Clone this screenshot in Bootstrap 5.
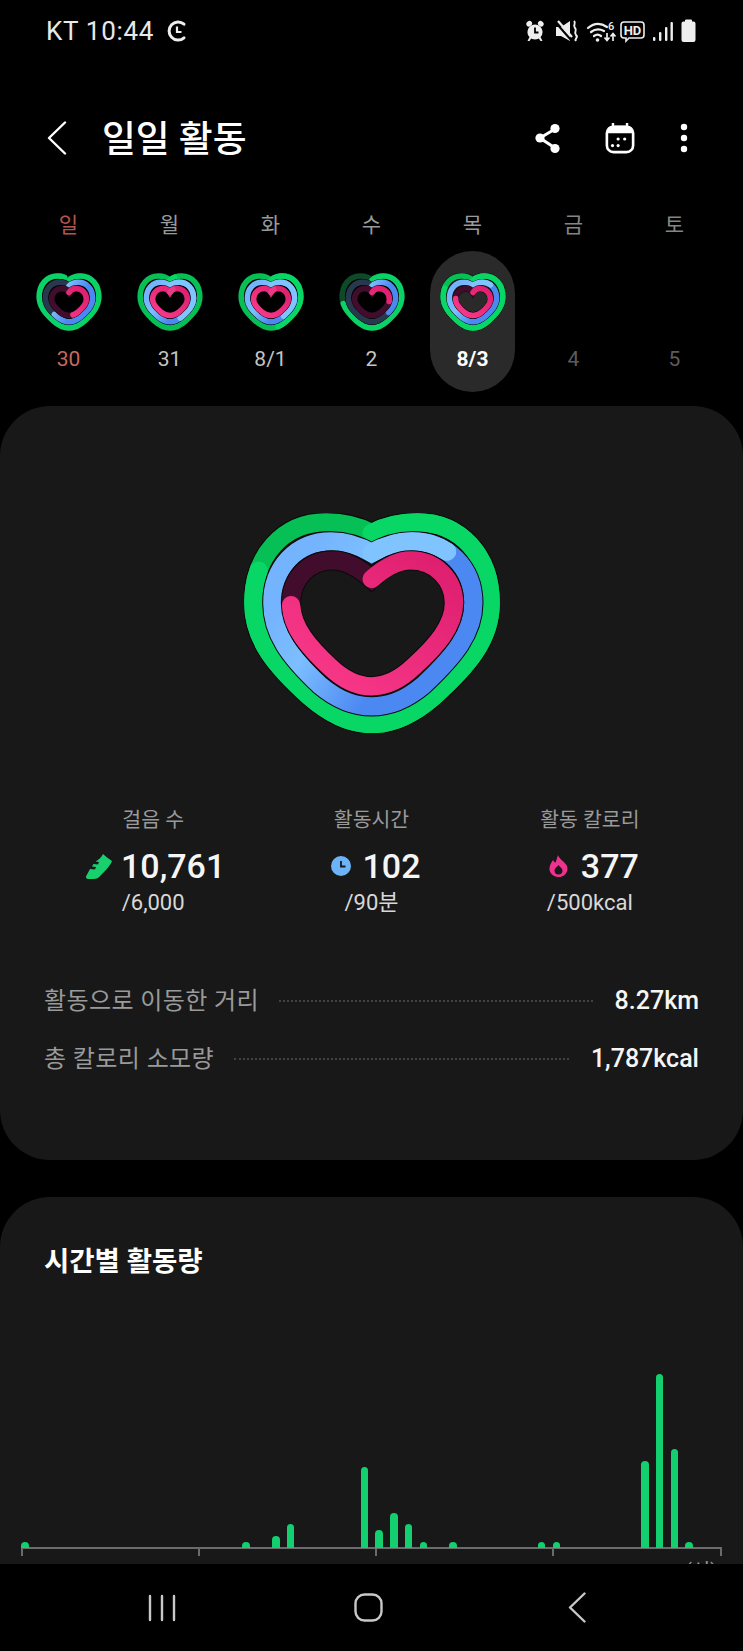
<!DOCTYPE html>
<html lang="ko">
<head>
  <meta charset="UTF-8" />
  <title>일일 활동</title>
  <link href="https://cdn.jsdelivr.net/npm/bootstrap@5.3.3/dist/css/bootstrap.min.css" rel="stylesheet" />
  <style>
    html, body { height: 1651px; overflow: hidden; }
    body { background: #000; color: #fff; font-family: Roboto, "Noto Sans CJK KR", sans-serif; }
    .screen { height: 1651px; }
    .scroll-area { min-height: 0; overflow: hidden; }

    .status-bar { height: 62px; padding: 0 47px 0 46px; font-size: 26px; color: #e8e8e8; }
    .status-time { margin-right: 13px; letter-spacing: .7px; }
    .status-icons svg { display: block; }

    .top-bar { height: 56px; margin-top: 48px; padding-left: 47px; }
    .top-back { stroke-width: 2.4; }
    .top-title { margin: 0 0 0 35px; padding-top: 4px; font-size: 36.8px; font-weight: 500; line-height: 56px; }
    .top-actions svg { display: block; }
    .action-cal { margin-left: 42px; }
    .action-more { margin-left: 45px; margin-right: 55px; }

    .week-strip { padding: 0 18px; margin-top: 44px; }
    .week-cell { flex: 0 0 101px; text-align: center; }
    .week-name { font-size: 21px; line-height: 30px; color: #9a9a9a; }
    .week-name.is-sun { color: #b5564e; }
    .week-name.is-off { color: #858585; }
    .day-row { margin-top: 11px; height: 141px; }
    .day-pill { width: 85px; height: 141px; margin: 0 auto; padding-top: 22px; border-radius: 43px; }
    .day-pill.is-today { background: #2a2a2a; }
    .day-pill svg { display: block; margin: 0 auto; }
    .heart-gap { height: 58px; }
    .day-date { margin-top: 13px; font-size: 21px; line-height: 30px; color: #c4c4c4; }
    .day-date.is-sun { color: #c9685e; }
    .day-date.is-off { color: #5c5c5c; }
    .day-date.is-today { color: #fff; font-weight: 700; }

    .panel { background: #181818; border-radius: 50px; }
    .panel-main { height: 754px; margin-top: 14px; padding: 107px 44px 0; }
    .panel-main .ring-heart { display: block; margin: 0 auto; }
    .stat-row { margin-top: 72px; }
    .stat-cell { flex: 1 1 0; text-align: center; }
    .stat-label { font-size: 20.5px; line-height: 30px; color: #9a9a9a; }
    .stat-value { height: 44px; margin-top: 9px; padding-left: 5px; font-size: 34px; font-weight: 500; line-height: 44px; color: #f5f5f5; }
    .stat-icon { flex: 0 0 26px; margin-right: 9px; }
    .stat-icon svg { display: block; margin: 0 auto; }
    .stat-goal { margin-top: 1px; font-size: 22px; line-height: 28px; color: #d8d8d8; }

    .dist-row { height: 34px; font-size: 24px; line-height: 34px; }
    .dist-row.first { margin-top: 67px; }
    .dist-row.second { margin-top: 24px; }
    .dist-label { color: #9a9a9a; letter-spacing: .4px; }
    .dist-dots { height: 0; margin: 0 22px 0 20px; border-top: 2px dotted #424242; }
    .dist-value { font-size: 25px; font-weight: 500; color: #f5f5f5; }

    .panel-chart { margin-top: 37px; padding-top: 47px; height: 420px; }
    .chart-title { margin: 0 0 0 44px; font-size: 27.5px; font-weight: 700; line-height: 36px; }
    .chart-area { margin: 94px 21px 0; }
    .chart-bars { display: grid; grid-template-columns: repeat(48, 14.77px); height: 174px; align-items: end; }
    .chart-bar { width: 7.5px; background: #13cf6f; border-radius: 4px 4px 0 0; }
    .chart-axis { height: 9px; border-top: 2px solid #6b6b6b; margin-top: -1px; }
    .axis-seg { flex: 0 0 177px; border-left: 2px solid #6b6b6b; }
    .axis-seg.last { flex: 1 1 0; border-right: 2px solid #6b6b6b; }
    .chart-labels { font-size: 20px; line-height: 24px; color: #9a9a9a; padding-left: 372px; margin-top: 6px; }
    .chart-labels span { flex: 0 0 177px; }
    .chart-labels span:last-child { flex: 0 0 auto; margin-left: -62px; margin-top: -3px; }

    .nav-bar { flex: 0 0 87px; background: #000; padding-right: 3px; }
    .nav-slot { flex: 0 0 207px; }
    .nav-slot.wide { flex-basis: 210px; }
    .nav-slot svg { display: block; margin: 0 auto; }
  </style>
</head>
<body>
  <div class="screen d-flex flex-column">
    <div class="scroll-area flex-grow-1">

      <div class="status-bar d-flex align-items-center justify-content-between">
        <div class="d-flex align-items-center">
          <span class="status-time">KT 10:44</span>
          <svg width="20" height="22" viewBox="0 0 20 22" fill="none" stroke="#eee" stroke-width="3">
            <path d="M17 4.2A9 9 0 1 0 17 17.8" stroke-linecap="round" />
            <path d="M10 6.5v5.5h4.5" stroke-width="2.2" />
          </svg>
        </div>
        <div class="status-icons d-flex align-items-center">
          <svg width="170" height="24" viewBox="0 0 170 24">
            <!-- alarm -->
            <g fill="#eee">
              <circle cx="9" cy="13" r="7.6" />
              <ellipse cx="3.2" cy="4.8" rx="3" ry="2.6" transform="rotate(-40 3.2 4.8)" />
              <ellipse cx="14.8" cy="4.8" rx="3" ry="2.6" transform="rotate(40 14.8 4.8)" />
              <path d="M3.5 18l-2 4h2l2-3zM14.5 18l2 4h-2l-2-3z" />
            </g>
            <path d="M9 8.5v5h3.5" fill="none" stroke="#000" stroke-width="1.8" />
            <!-- mute -->
            <path d="M30 8h5l9-6v20l-9-5h-5z" fill="#eee" />
            <path d="M31 5l14 16" stroke="#000" stroke-width="2" />
            <path d="M32 2l14 16" stroke="#eee" stroke-width="2.200" />
            <path d="M48 2c3 3-2 4 1 7s-2 4 1 7-2 3 0 6" fill="none" stroke="#eee" stroke-width="2" />
            <!-- wifi -->
            <g fill="none" stroke="#eee" stroke-width="2.200" stroke-linecap="round">
              <path d="M62 9c6-5 13-5 19-1" />
              <path d="M65 13c4-3 9-3 13-1" />
              <path d="M68 17c2-1.500 5-1.500 7 0" />
            </g>
            <circle cx="71.500" cy="21" r="1.800" fill="#eee" />
            <text x="82" y="11" font-size="11" font-family="Roboto, sans-serif" font-weight="500" fill="#eee">6</text>
            <path d="M81 14v7m-2.500-2.500 2.500 3 2.500-3M87 22v-7m-2.500 2.500 2.500-3 2.500 3" fill="none" stroke="#eee" stroke-width="1.700" />
            <!-- hd -->
            <path d="M98 3h17a3 3 0 0 1 3 3v10a3 3 0 0 1-3 3h-12l-3 3v-3h-2a3 3 0 0 1-3-3V6a3 3 0 0 1 3-3z" fill="none" stroke="#eee" stroke-width="1.600" />
            <text x="106.500" y="16" text-anchor="middle" font-size="13" font-family="Roboto, sans-serif" font-weight="700" fill="#eee">HD</text>
            <!-- signal -->
            <g fill="#eee">
              <rect x="127" y="18" width="2.400" height="4" rx="1" />
              <rect x="133" y="13" width="2.400" height="9" rx="1" />
              <rect x="139" y="8" width="2.400" height="14" rx="1" />
              <rect x="144.500" y="3" width="2.400" height="19" rx="1" />
            </g>
            <!-- battery -->
            <path d="M160 0.500h5a1 1 0 0 1 1 1v1h1.500a2 2 0 0 1 2 2V21a2 2 0 0 1-2 2h-10a2 2 0 0 1-2-2V4.500a2 2 0 0 1 2-2H159v-1a1 1 0 0 1 1-1z" fill="#eee" />
          </svg>
        </div>
      </div>

      <div class="top-bar d-flex align-items-center">
        <svg class="top-back" width="20" height="34" viewBox="0 0 20 34" fill="none" stroke="#fff" stroke-linecap="round" stroke-linejoin="round">
          <path d="M18 1.500 2 17l16 15.500" />
        </svg>
        <h1 class="top-title flex-grow-1">일일 활동</h1>
        <div class="top-actions d-flex align-items-center">
          <svg width="30" height="32" viewBox="0 0 30 32" fill="#fff" stroke="#fff">
            <path d="M22 7 7 16l15 10" fill="none" stroke-width="3" />
            <circle cx="22" cy="6.500" r="4.600" stroke="none" />
            <circle cx="7" cy="16" r="4.600" stroke="none" />
            <circle cx="22" cy="26.500" r="4.600" stroke="none" />
          </svg>
          <svg class="action-cal" width="30" height="31" viewBox="0 0 32 33">
            <rect x="2" y="4" width="28" height="27" rx="7" fill="none" stroke="#fff" stroke-width="2.800" />
            <path d="M2 11V9a6 6 0 0 1 6-6h16a6 6 0 0 1 6 6v2z" fill="#fff" />
            <path d="M8.500 0.500v4M23.500 0.500v4" stroke="#fff" stroke-width="2.600" stroke-linecap="round" />
            <g fill="#fff">
              <circle cx="14" cy="17" r="1.700" /><circle cx="21" cy="17" r="1.700" />
              <circle cx="8" cy="24" r="1.700" /><circle cx="14" cy="24" r="1.700" />
            </g>
          </svg>
          <svg class="action-more" width="8" height="30" viewBox="0 0 8 30" fill="#fff">
            <circle cx="4" cy="4" r="3.200" /><circle cx="4" cy="15" r="3.200" /><circle cx="4" cy="26" r="3.200" />
          </svg>
        </div>
      </div>

      <div class="week-strip">
        <div class="d-flex" id="weekNames"></div>
        <div class="d-flex day-row" id="weekDays"></div>
      </div>

      <section class="panel panel-main">
        <div id="bigHeart"></div>

        <div class="d-flex stat-row">
          <div class="stat-cell">
            <div class="stat-label">걸음 수</div>
            <div class="stat-value d-flex justify-content-center align-items-center">
              <span class="stat-icon">
                <svg width="26" height="25" viewBox="0 0 26 25" fill="#19d06e">
                  <path d="M17 0C19 2 22 4 26 7 25 10 22 14 17 19 14 22 12 25 8 25L2 25C0 25-.5 23 .5 21.500L4 15 9 15.500 10 13 6 12.500 7.500 10 12 10.500 13 8 9.500 7.500C12 6 15 4 17 0Z" />
                </svg>
              </span>10,761
            </div>
            <div class="stat-goal">/6,000</div>
          </div>
          <div class="stat-cell">
            <div class="stat-label">활동시간</div>
            <div class="stat-value d-flex justify-content-center align-items-center">
              <span class="stat-icon">
                <svg width="20" height="20" viewBox="0 0 20 20">
                  <circle cx="10" cy="10" r="10" fill="#6db3f8" />
                  <path d="M10 5v5.500h4.500" fill="none" stroke="#181818" stroke-width="1.800" />
                </svg>
              </span>102
            </div>
            <div class="stat-goal">/90분</div>
          </div>
          <div class="stat-cell">
            <div class="stat-label">활동 칼로리</div>
            <div class="stat-value d-flex justify-content-center align-items-center">
              <span class="stat-icon">
                <svg width="19" height="22" viewBox="0 0 19 22" fill="#f0328f">
                  <path fill-rule="evenodd" d="M9 0C10 4 16 7 18 11 20 17 15 22 9.500 22 4 22 0 18 .5 13 1 9 3 7 4 5 5 7 6 7.500 6.500 7.500 7.500 5 8 3 9 0ZM9.500 10C7.500 12 5.500 13.500 5.500 15.500A4 4 0 0 0 13.500 15.500C13.500 13.500 11 12 9.500 10Z" />
                </svg>
              </span>377
            </div>
            <div class="stat-goal">/500kcal</div>
          </div>
        </div>

        <div class="d-flex align-items-center dist-row first">
          <span class="dist-label">활동으로 이동한 거리</span>
          <span class="dist-dots flex-grow-1"></span>
          <span class="dist-value">8.27km</span>
        </div>
        <div class="d-flex align-items-center dist-row second">
          <span class="dist-label">총 칼로리 소모량</span>
          <span class="dist-dots flex-grow-1"></span>
          <span class="dist-value">1,787kcal</span>
        </div>
      </section>

      <section class="panel panel-chart">
        <h2 class="chart-title">시간별 활동량</h2>
        <div class="chart-area">
          <div class="chart-bars" id="chartBars"></div>
          <div class="chart-axis d-flex">
            <div class="axis-seg"></div>
            <div class="axis-seg"></div>
            <div class="axis-seg"></div>
            <div class="axis-seg last"></div>
          </div>
          <div class="chart-labels d-flex">
            <span>12</span>
            <span>18</span>
            <span>(시)</span>
          </div>
        </div>
      </section>
    </div>

    <div class="nav-bar d-flex align-items-center justify-content-center">
      <div class="nav-slot">
        <svg width="28" height="28" viewBox="0 0 28 28" stroke="#c8c8c8" stroke-width="2.400" stroke-linecap="round">
          <path d="M2 2v24M14 2v24M26 2v24" />
        </svg>
      </div>
      <div class="nav-slot">
        <svg width="29" height="29" viewBox="0 0 29 29" fill="none" stroke="#c8c8c8" stroke-width="2.400">
          <rect x="1.500" y="1.500" width="26" height="26" rx="9" />
        </svg>
      </div>
      <div class="nav-slot wide">
        <svg width="18" height="31" viewBox="0 0 18 31" fill="none" stroke="#c8c8c8" stroke-width="2.400" stroke-linecap="round" stroke-linejoin="round">
          <path d="M16.500 1.500 2 15.500l14.500 14" />
        </svg>
      </div>
    </div>
  </div>

  <script>
    const BIG = {
      box: "70 70 768 660", w: 256, h: 220, line: 55, edge: 61,
      green: "M453 130C500 105 550 98 590 98C720 98 810 200 810 340C810 450 740 530 640 620C560 690 500 703 453 703C406 703 346 690 266 620C166 530 98 450 98 340C98 200 186 98 316 98C356 98 406 105 453 130Z",
      blue: "M453 190C490 168 535 155 575 155C680 155 758 235 758 340C758 430 700 500 610 585C545 640 495 650 453 650C411 650 361 640 296 585C206 500 155 430 155 340C155 235 226 155 331 155C371 155 416 168 453 190Z",
      pink: "M453 268C490 235 530 212 570 212C645 212 700 270 700 340C700 410 645 470 580 530C530 578 490 590 453 590C416 590 376 578 326 530C261 470 211 410 211 340C211 270 261 212 336 212C376 212 416 235 453 268Z"
    };

    // the small icons have fatter rings than the big one, so their outlines are built here
    function smallOutline(hw, top, bottom, notch) {
      const x = u => (33 + hw * u).toFixed(2);
      const y = v => (top + (bottom - top) * v).toFixed(2);
      return `M33 ${notch}C${x(.132)} ${y(.012)} ${x(.272)} ${y(0)} ${x(.385)} ${y(0)}` +
        `C${x(.75)} ${y(0)} ${x(1)} ${y(.169)} ${x(1)} ${y(.4)}` +
        `C${x(1)} ${y(.582)} ${x(.806)} ${y(.714)} ${x(.525)} ${y(.863)}` +
        `C${x(.3)} ${y(.979)} ${x(.132)} ${y(1)} 33 ${y(1)}` +
        `C${x(-.132)} ${y(1)} ${x(-.3)} ${y(.979)} ${x(-.525)} ${y(.863)}` +
        `C${x(-.806)} ${y(.714)} ${x(-1)} ${y(.582)} ${x(-1)} ${y(.4)}` +
        `C${x(-1)} ${y(.169)} ${x(-.75)} ${y(0)} ${x(-.385)} ${y(0)}` +
        `C${x(-.272)} ${y(0)} ${x(-.132)} ${y(.012)} 33 ${notch}Z`;
    }

    const SMALL = {
      box: "0 0 66 58", w: 66, h: 58, line: 5.5, edge: 6.4,
      green: smallOutline(29.8, 3, 55, 7),
      blue: smallOutline(23.6, 9.3, 48.8, 13),
      pink: smallOutline(17.4, 15.5, 42.5, 19.5)
    };

    function ring(d, color, width, dash) {
      const dashAttr = dash ? `stroke-dasharray="${dash} 200" stroke-linecap="round"` : "";
      return `<path d="${d}" pathLength="100" fill="none" stroke="${color}" stroke-width="${width}" ${dashAttr} />`;
    }

    // value below 1 is an arc on a dim track, above 1 is a full lap plus a lighter overlap
    function heartRing(shape, d, value, c) {
      let out = ring(d, "#0a0a0a", shape.edge);
      if (value < 1) {
        out += ring(d, c.track, shape.line) + ring(d, c.arc, shape.line, value * 100);
      } else {
        out += ring(d, c.full, shape.line);
        if (value > 1) out += ring(d, c.over, shape.line, (value - 1) * 100);
      }
      return out;
    }

    let heartId = 0;
    function heart(shape, g, b, p) {
      const id = ++heartId;
      return `<svg class="ring-heart" width="${shape.w}" height="${shape.h}" viewBox="${shape.box}">
        <defs>
          <linearGradient id="blue${id}" x1=".1" y1=".2" x2=".7" y2=".5">
            <stop offset="0" stop-color="#74b3fd" /><stop offset=".4" stop-color="#7cbeff" /><stop offset="1" stop-color="#4c88f2" />
          </linearGradient>
          <linearGradient id="pink${id}" x1="1" y1="0" x2="0" y2="1">
            <stop offset="0" stop-color="#dd1e6e" /><stop offset="1" stop-color="#fb3a8b" />
          </linearGradient>
        </defs>
        ${heartRing(shape, shape.green, g, { track: "#0d4a27", arc: "#0bd266", full: "#07c055", over: "#08d765" })}
        ${heartRing(shape, shape.blue, b, { track: "#28394f", arc: `url(#blue${id})`, full: `url(#blue${id})`, over: "#80c4ff" })}
        ${heartRing(shape, shape.pink, p, { track: "#420c2c", arc: `url(#pink${id})`, full: `url(#pink${id})`, over: "#e83a86" })}
      </svg>`;
    }

    const days = [
      { name: "일", date: "30", sun: true, rings: [0.97, 0.62, 0.46] },
      { name: "월", date: "31", rings: [1.03, 1.42, 1.04] },
      { name: "화", date: "8/1", rings: [1.46, 1.4, 1.04] },
      { name: "수", date: "2", rings: [0.72, 0.36, 0.27] },
      { name: "목", date: "8/3", today: true, rings: [1.806, 1.135, 0.76] },
      { name: "금", date: "4", off: true },
      { name: "토", date: "5", off: true }
    ];

    const names = document.getElementById("weekNames");
    const cells = document.getElementById("weekDays");
    days.forEach(day => {
      const state = day.sun ? "is-sun" : day.off ? "is-off" : day.today ? "is-today" : "";
      names.insertAdjacentHTML("beforeend",
        `<div class="week-cell week-name ${day.sun ? "is-sun" : day.off ? "is-off" : ""}">${day.name}</div>`);
      const art = day.rings ? heart(SMALL, ...day.rings) : `<div class="heart-gap"></div>`;
      cells.insertAdjacentHTML("beforeend",
        `<div class="week-cell"><div class="day-pill ${day.today ? "is-today" : ""}">${art}<div class="day-date ${state}">${day.date}</div></div></div>`);
    });

    document.getElementById("bigHeart").innerHTML = heart(BIG, 1.806, 1.135, 0.76);

    // slot index and bar height in px
    const bars = [[0, 6], [15, 6], [17, 12], [18, 24], [23, 81], [24, 18], [25, 35], [26, 24], [27, 6], [29, 6], [35, 6], [36, 6], [42, 87], [43, 174], [44, 99], [45, 6]];
    const chart = document.getElementById("chartBars");
    bars.forEach(([slot, h]) => {
      const bar = document.createElement("div");
      bar.className = "chart-bar";
      bar.style.gridColumn = slot + 1;
      bar.style.gridRow = 1;
      bar.style.height = h + "px";
      chart.appendChild(bar);
    });
  </script>
  <script src="https://cdn.jsdelivr.net/npm/bootstrap@5.3.3/dist/js/bootstrap.bundle.min.js"></script>
</body>
</html>
